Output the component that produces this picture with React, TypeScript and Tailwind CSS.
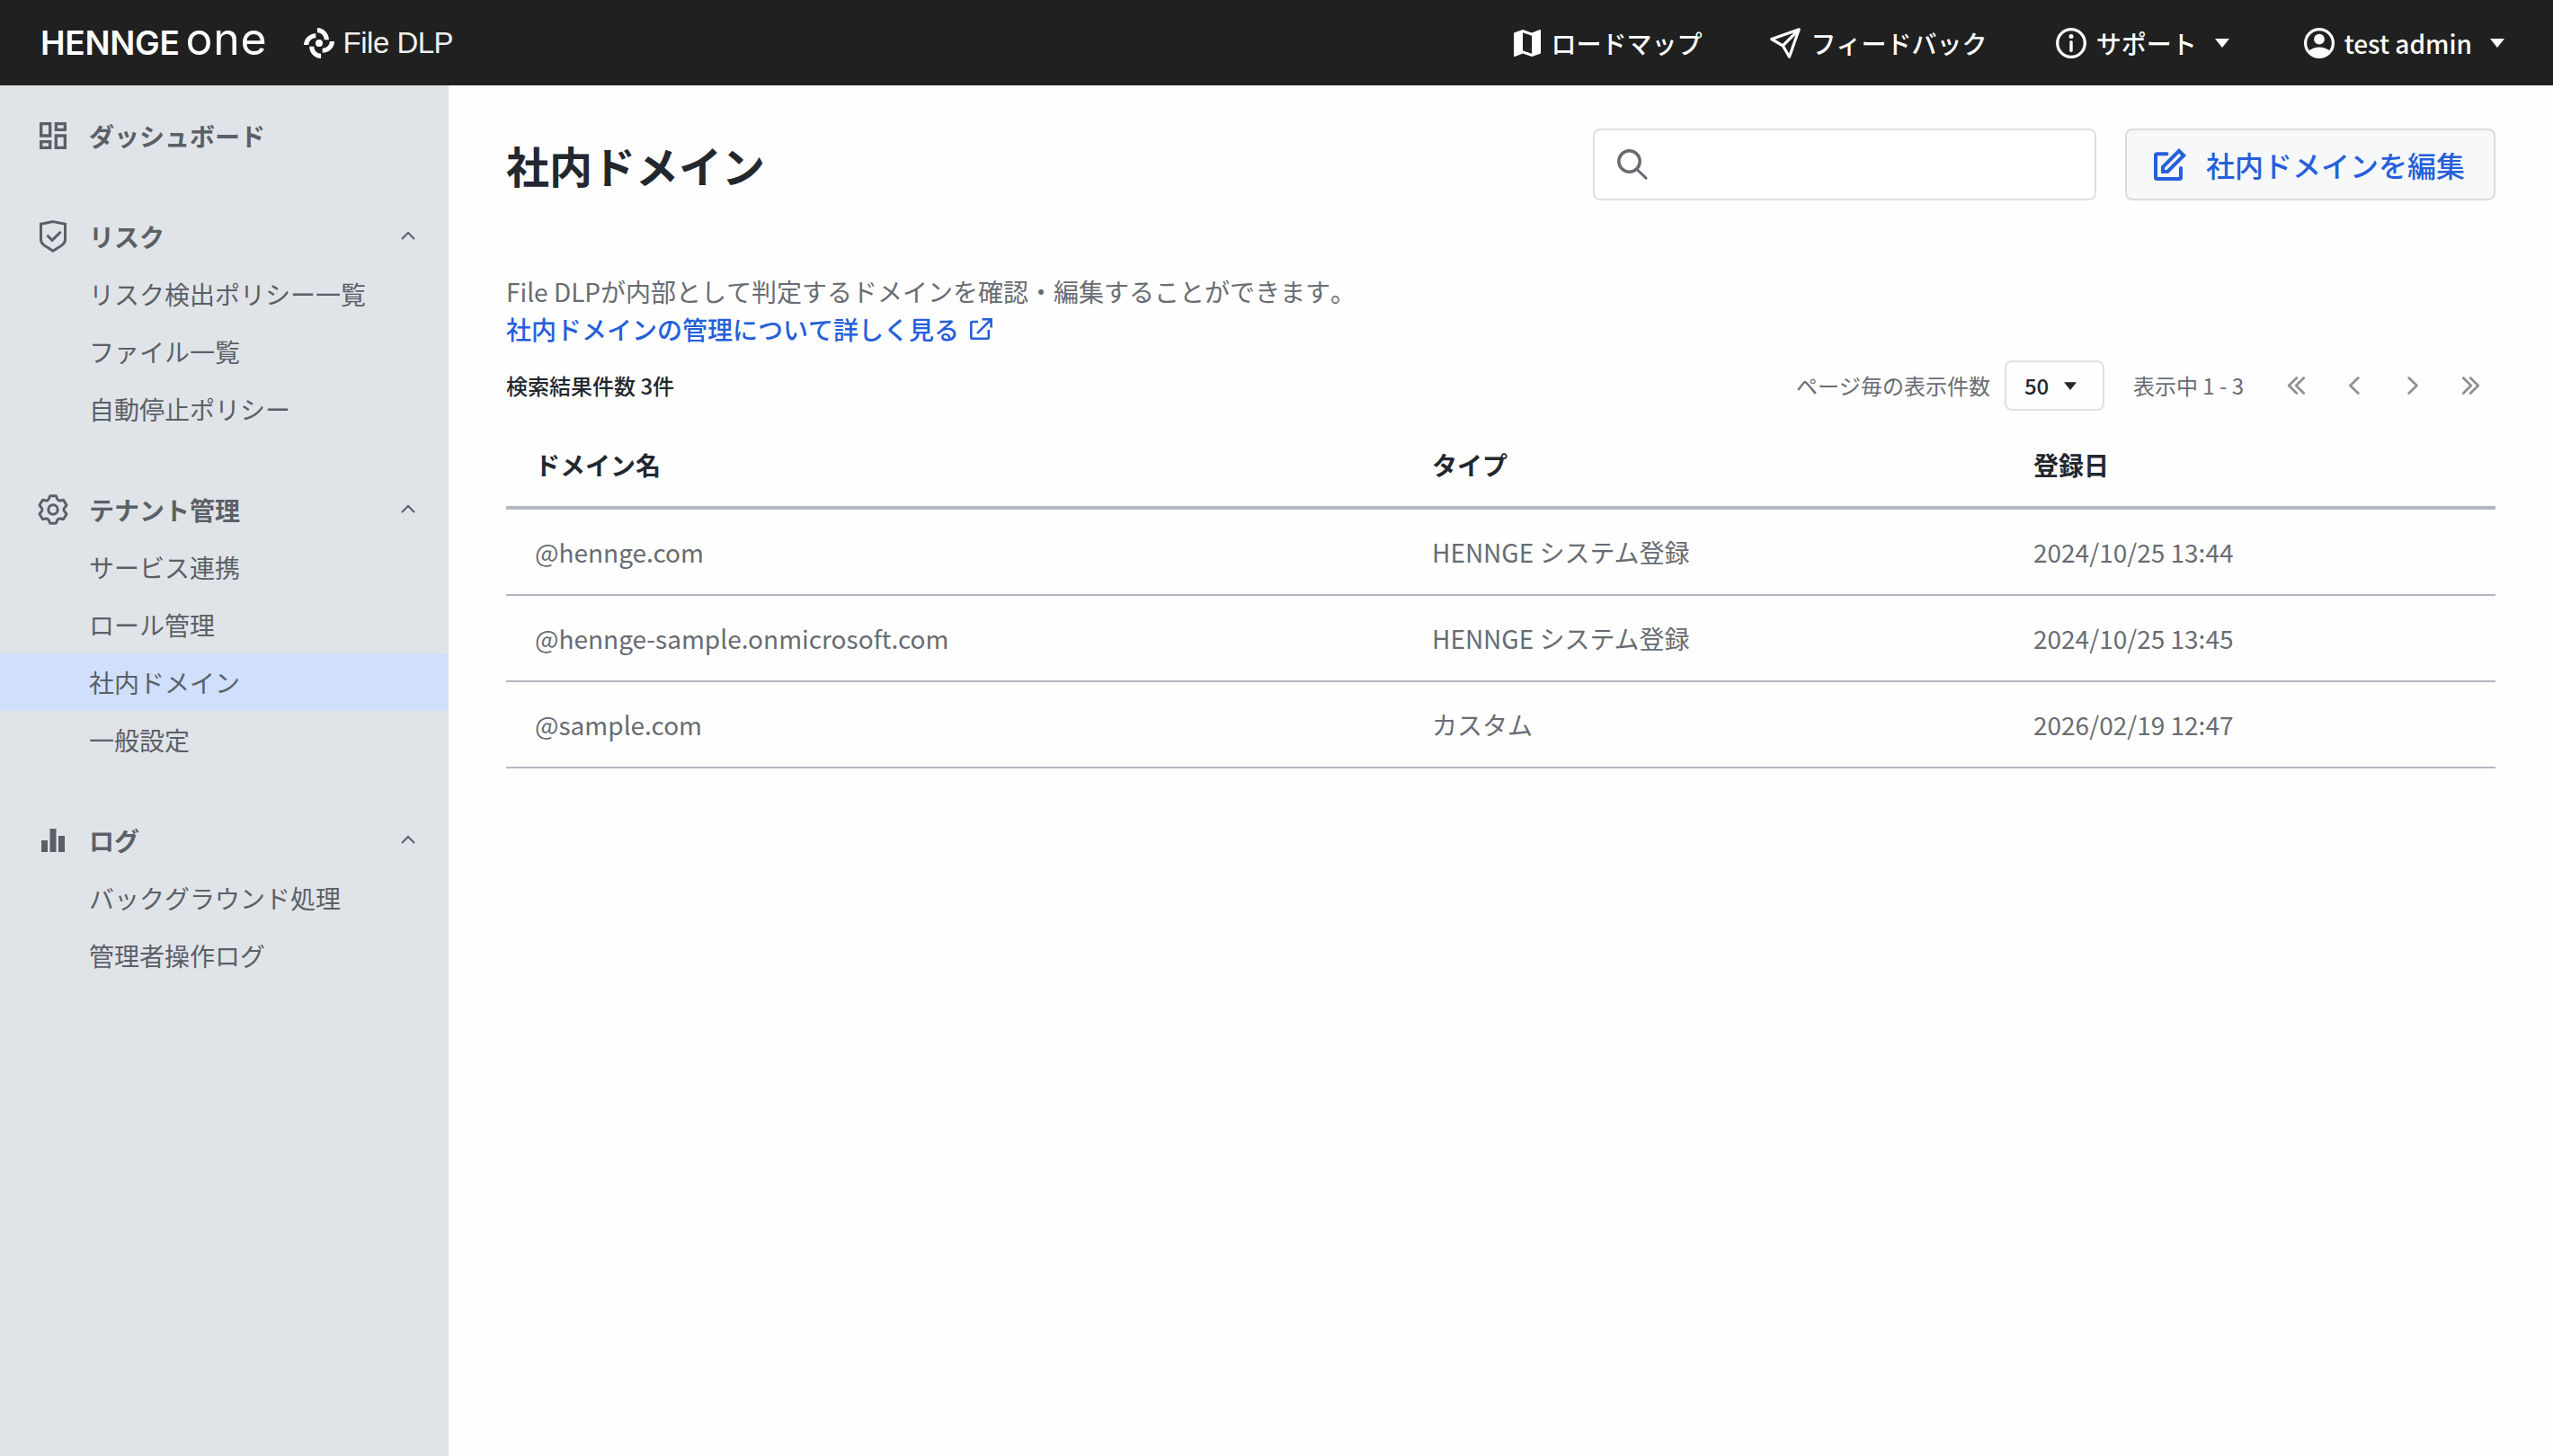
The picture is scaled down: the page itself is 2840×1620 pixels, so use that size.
import React from 'react';
import clsx from 'clsx';
import { MdMap, MdOutlineDashboard } from 'react-icons/md';

interface IconProps {
  className?: string;
}

const ProductMark: React.FC = () => (
  <svg viewBox="0 0 34 34" className="size-[34px]" fill="none" stroke="#fff" strokeWidth="5.1">
    {[0, 90, 180, 270].map((angle) => (
      <path key={angle} d="M14.9 2.6C20.6 2.6 25.3 7.4 25.3 13.3" transform={`rotate(${angle} 17 17)`} />
    ))}
    <circle cx="17" cy="17" r="4" fill="#fff" stroke="none" />
  </svg>
);

const SendIcon: React.FC<IconProps> = ({ className }) => (
  <svg viewBox="0 0 34 34" className={className} fill="none" stroke="currentColor" strokeWidth="3.2" strokeLinejoin="round">
    <path d="M32.2 1.8L1.8 12.5L14.2 19.8L21.5 32.2Z" />
    <path d="M32.2 1.8L14.2 19.8" />
  </svg>
);

const InfoIcon: React.FC<IconProps> = ({ className }) => (
  <svg viewBox="0 0 34 34" className={className} fill="none" stroke="currentColor">
    <circle cx="17" cy="17" r="15.3" strokeWidth="3.3" />
    <path d="M17 15.8V25.2" strokeWidth="3.4" strokeLinecap="round" />
    <circle cx="17" cy="9.4" r="2.5" fill="currentColor" stroke="none" />
  </svg>
);

const AccountIcon: React.FC<IconProps> = ({ className }) => (
  <svg viewBox="0 0 34 34" className={className} fill="currentColor">
    <circle cx="17" cy="17" r="15.4" fill="none" stroke="currentColor" strokeWidth="3.2" />
    <circle cx="17" cy="12.7" r="5.9" />
    <path d="M4.5 26.5C8 23 12 21.6 17 21.6S26 23 29.5 26.5C26.5 31 22 33 17 33S7.5 31 4.5 26.5Z" />
  </svg>
);

const Caret: React.FC<IconProps> = ({ className }) => (
  <svg viewBox="0 0 16 10" className={className} fill="currentColor">
    <path d="M0 0H16L8 10Z" />
  </svg>
);

const ShieldIcon: React.FC<IconProps> = ({ className }) => (
  <svg viewBox="0 0 30 36" className={className} fill="none" stroke="currentColor" strokeWidth="3">
    <path d="M15 1.6L28.5 4.3V21.5C28.5 26 25.5 28 15 34.2C4.5 28 1.5 26 1.5 21.5V4.3Z" />
    <path d="M8.5 16.8L14 22.3L23.6 12.9" />
  </svg>
);

const GearIcon: React.FC<IconProps> = ({ className }) => (
  <svg viewBox="0 0 34 34" className={className} fill="none" stroke="currentColor" strokeWidth="3" strokeLinejoin="round">
    <path d="M13.8 1.8H20.2C21.6 3.2 20.8 5.3 23 6.6C25.2 7.9 26.8 6 28.7 6.4L32 12C31.4 13.9 29 14.5 29 17C29 19.5 31.4 20.1 32 22L28.7 27.6C26.8 28 25.2 26.1 23 27.4C20.8 28.7 21.6 30.8 20.2 32.2H13.8C12.4 30.8 13.2 28.7 11 27.4C8.8 26.1 7.2 28 5.3 27.6L2 22C2.6 20.1 5 19.5 5 17C5 14.5 2.6 13.9 2 12L5.3 6.4C7.2 6 8.8 7.9 11 6.6C13.2 5.3 12.4 3.2 13.8 1.8Z" />
    <circle cx="17" cy="17" r="5.2" />
  </svg>
);

const BarsIcon: React.FC<IconProps> = ({ className }) => (
  <svg viewBox="0 0 26 26" className={className} fill="currentColor">
    <path d="M0 13H7V26H0ZM9.5 0H16.5V26H9.5ZM19 8H26V26H19Z" />
  </svg>
);

const SearchIcon: React.FC<IconProps> = ({ className }) => (
  <svg viewBox="0 0 34 34" className={className} fill="none" stroke="currentColor" strokeLinecap="round">
    <circle cx="13.5" cy="13.5" r="11.7" strokeWidth="3.5" />
    <path d="M22 22.5L32 32.2" strokeWidth="3" />
  </svg>
);

const EditIcon: React.FC<IconProps> = ({ className }) => (
  <svg viewBox="0 0 36 36" className={className} fill="none" stroke="currentColor" strokeWidth="4" strokeLinejoin="round">
    <path d="M14.5 6.3H3.5C2.5 6.3 2 6.8 2 7.8V32.5C2 33.5 2.5 34 3.5 34H28.5C29.5 34 30 33.5 30 32.5V22" strokeLinecap="round" />
    <path d="M10 26V20.8L28 2.8L33.2 8L15.2 26Z" strokeLinejoin="miter" />
  </svg>
);

const ExternalLinkIcon: React.FC<IconProps> = ({ className }) => (
  <svg viewBox="0 0 25 24" className={className} fill="none" stroke="currentColor" strokeWidth="2.6">
    <path d="M9 4H2.5C1.7 4 1.3 4.5 1.3 5.3V21.5C1.3 22.3 1.7 22.7 2.5 22.7H19.5C20.3 22.7 20.8 22.3 20.8 21.5V13" />
    <path d="M13.5 1.3H23.6V10.5M23.6 1.3L8 16.8" />
  </svg>
);

const Chevron: React.FC<{ dir: 'up' | 'left' | 'right'; double?: boolean }> = ({ dir, double }) => {
  if (dir === 'up') {
    return (
      <svg viewBox="0 0 16 10" className="mb-0.5 h-2.5 w-4" fill="none" stroke="currentColor" strokeWidth="2" strokeLinecap="round">
        <path d="M1.5 8.5L8 2L14.5 8.5" />
      </svg>
    );
  }
  return (
    <svg
      viewBox="0 0 22 20"
      className={clsx('h-5 w-[22px]', dir === 'right' && '-scale-x-100')}
      fill="none"
      stroke="currentColor"
      strokeWidth="2.7"
      strokeLinecap="round"
      strokeLinejoin="round"
    >
      {double ? <path d="M11.8 1.5L3.2 10L11.8 18.5M19.7 1.5L11.2 10L19.7 18.5" /> : <path d="M15.3 1.5L6.5 10L15.3 18.5" />}
    </svg>
  );
};

const TopBar: React.FC = () => (
  <header className="flex h-[95px] w-full items-center bg-[#202020] pr-[54px] text-white">
    <div className="flex flex-1 items-center pl-[45px]">
      <div className="mb-2.5 flex items-baseline font-['Inter',sans-serif] leading-none">
        <span className="text-[37px] font-semibold tracking-[-0.3px]">HENNGE</span>
        <span className="ml-[7px] text-[50px] leading-none tracking-[0.8px]">one</span>
      </div>
      <div className="ml-10 flex items-center gap-2.5">
        <ProductMark />
        <span className="font-['Liberation_Sans',sans-serif] text-[33px] tracking-[-0.5px] text-[#f0f0f0]">File DLP</span>
      </div>
    </div>
    <nav className="flex items-center text-[28px] font-medium">
      <a href="#" className="flex items-center gap-3">
        <MdMap className="-m-[5px] size-10" />
        <span>ロードマップ</span>
      </a>
      <a href="#" className="ml-[75px] flex items-center gap-3">
        <SendIcon className="size-[34px]" />
        <span>フィードバック</span>
      </a>
      <a href="#" className="ml-[76px] flex items-center">
        <InfoIcon className="mr-[11px] size-[34px]" />
        <span>サポート</span>
        <Caret className="ml-5 h-2.5 w-4" />
      </a>
      <a href="#" className="ml-[83px] flex items-center [font-kerning:normal]">
        <AccountIcon className="mr-[11px] size-[34px]" />
        <span>test admin</span>
        <Caret className="ml-5 h-2.5 w-4" />
      </a>
    </nav>
  </header>
);

interface Section {
  title: string;
  icon: React.ReactNode;
  items: string[];
}

const sections: Section[] = [
  { title: 'リスク', icon: <ShieldIcon className="h-9 w-[30px]" />, items: ['リスク検出ポリシー一覧', 'ファイル一覧', '自動停止ポリシー'] },
  { title: 'テナント管理', icon: <GearIcon className="size-[34px]" />, items: ['サービス連携', 'ロール管理', '社内ドメイン', '一般設定'] },
  { title: 'ログ', icon: <BarsIcon className="size-[26px]" />, items: ['バックグラウンド処理', '管理者操作ログ'] },
];

const Sidebar: React.FC = () => (
  <aside className="flex w-[499px] shrink-0 flex-col gap-12 bg-[#e0e4e9] pt-6 text-[28px] text-[#5b6066]">
    <div className="flex h-16 items-center font-bold">
      <div className="flex w-[99px] justify-center pl-[19px]"><MdOutlineDashboard className="size-10" /></div>
      ダッシュボード
    </div>
    {sections.map((section) => (
      <div key={section.title}>
        <div className="flex h-16 items-center pr-[37px] font-bold">
          <div className="flex w-[99px] justify-center pl-[19px]">{section.icon}</div>
          <span className="flex-1">{section.title}</span>
          <Chevron dir="up" />
        </div>
        {section.items.map((item) => (
          <a key={item} href="#" className={clsx('flex h-16 items-center pl-[99px]', item === '社内ドメイン' && 'bg-[#cfdffc]')}>
            {item}
          </a>
        ))}
      </div>
    ))}
  </aside>
);

const rows = [
  { domain: '@hennge.com', type: 'HENNGE システム登録', date: '2024/10/25 13:44' },
  { domain: '@hennge-sample.onmicrosoft.com', type: 'HENNGE システム登録', date: '2024/10/25 13:45' },
  { domain: '@sample.com', type: 'カスタム', date: '2026/02/19 12:47' },
];

const DomainTable: React.FC = () => (
  <div className="mt-[13px] text-[28px] text-[#686c72] [font-kerning:normal]">
    <div className="grid h-[97px] grid-cols-[998px_669px_1fr] items-center border-b-4 border-[#b2b7c1] pl-8 font-bold text-[#23272e]">
      <span>ドメイン名</span>
      <span>タイプ</span>
      <span>登録日</span>
    </div>
    {rows.map((row) => (
      <div key={row.domain} className="grid h-24 grid-cols-[998px_669px_1fr] items-center border-b-2 border-[#b2b7c1] pl-8">
        <span>{row.domain}</span>
        <span>{row.type}</span>
        <span>{row.date}</span>
      </div>
    ))}
  </div>
);

const App: React.FC = () => {
  return (
    <div className="flex h-[1620px] w-[2840px] flex-col overflow-hidden bg-white font-['Noto_Sans_CJK_JP',sans-serif] [font-kerning:none]">
      <TopBar />
      <div className="flex flex-1">
        <Sidebar />
        <main className="flex-1 bg-[#fefefe] pt-12 pr-16 pl-16">
          {/* Title, search and edit */}
          <div className="flex h-20 items-center">
            <h1 className="flex-1 text-[48px] font-bold text-[#23272e]">社内ドメイン</h1>
            <div className="flex h-20 w-[560px] items-center rounded-lg border-2 border-[#dedfe0] bg-white pl-[25px] text-[#686c72]">
              <SearchIcon className="size-[34px]" />
            </div>
            <button className="ml-8 flex h-20 w-[412px] items-center rounded-lg border-2 border-[#d9dbdd] bg-[#f6f8fa] pl-[30px] text-[32px] font-medium text-[#265fda]">
              <EditIcon className="mr-[22px] size-9" />
              社内ドメインを編集
            </button>
          </div>

          <p className="mt-20 text-[28px] leading-[42px] text-[#686c72]">File DLPが内部として判定するドメインを確認・編集することができます。</p>
          <a href="#" className="flex items-center gap-3 text-[28px] leading-[42px] font-medium text-[#265fda]">
            社内ドメインの管理について詳しく見る
            <ExternalLinkIcon className="h-6 w-[25px]" />
          </a>

          {/* Result count and pager */}
          <div className="mt-3.5 flex h-14 items-center text-[24px] text-[#686c72]">
            <span className="flex-1 font-medium text-[#23272e]">検索結果件数 3件</span>
            <span>ページ毎の表示件数</span>
            <div className="ml-4 flex h-14 w-[111px] items-center rounded-lg border-2 border-[#dedfe0] pl-5 font-medium text-[#23272e]">
              50
              <Caret className="ml-[17px] h-[9px] w-3.5" />
            </div>
            <span className="mr-[47px] ml-8">表示中 1 - 3</span>
            <div className="flex gap-[43px] pr-4 text-[#8e9093]">
              <Chevron dir="left" double />
              <Chevron dir="left" />
              <Chevron dir="right" />
              <Chevron dir="right" double />
            </div>
          </div>

          <DomainTable />
        </main>
      </div>
    </div>
  );
};

export default App;
